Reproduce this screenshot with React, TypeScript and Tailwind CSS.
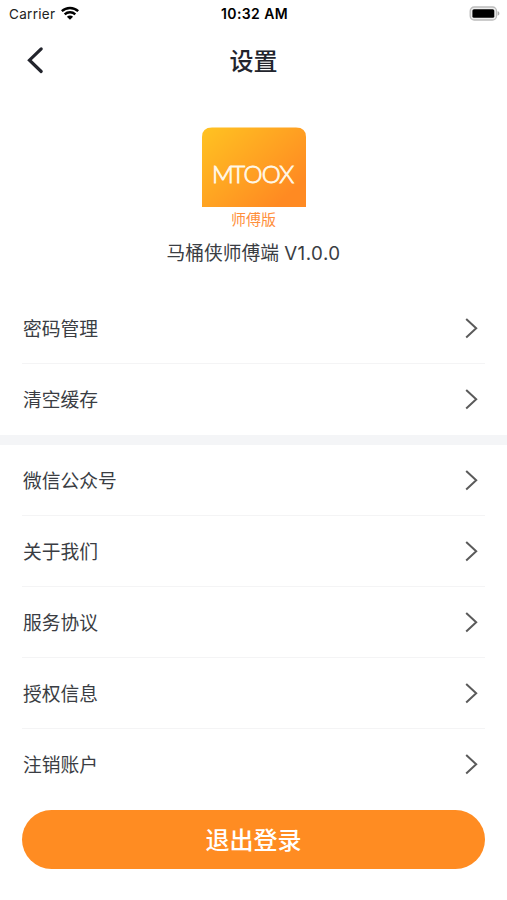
interface SettingItem {
  key: string;
  label: string;
}

const accountItems: SettingItem[] = [
  { key: 'password', label: '密码管理' },
  { key: 'cache', label: '清空缓存' },
];

const aboutItems: SettingItem[] = [
  { key: 'wechat', label: '微信公众号' },
  { key: 'about', label: '关于我们' },
  { key: 'terms', label: '服务协议' },
  { key: 'license', label: '授权信息' },
  { key: 'cancel', label: '注销账户' },
];

function StatusBar() {
  return (
    <div className="grid h-7 grid-cols-[1fr_auto_1fr] items-center pl-[9px] pr-[7px] font-['Inter','Liberation_Sans',sans-serif] text-[13.5px] text-black">
      <div className="flex items-center gap-[6px]">
        <span className="text-[#222] tracking-[0.3px]">Carrier</span>
        <svg width="18" height="14" viewBox="0 0 18 14" fill="none" stroke="#000" strokeWidth="2.4" className="-mt-0.5">
          <path d="M.8 5.2C5.3.9 12.7.9 17.2 5.2" />
          <path d="M3.7 8.3C6.7 5.5 11.3 5.5 14.3 8.3" />
          <path d="M9 13.8 5.9 10.8C7.6 9.1 10.4 9.1 12.1 10.8Z" fill="#000" stroke="none" />
        </svg>
      </div>
      <span className="-mt-0.5 text-center text-[14px] font-semibold tracking-[0.4px]">10:32 AM</span>
      <svg width="31" height="15" viewBox="0 0 31 15" className="-mt-0.5 justify-self-end">
        <rect x="1.2" y="1" width="26.3" height="13" rx="4" fill="#eee" stroke="#bcbcbc" strokeWidth="1.3" />
        <rect x="3.4" y="3.2" width="21.9" height="8.6" rx="1.6" fill="#000" />
        <path d="M28.6 5.3c2.4.6 2.4 3.8 0 4.4Z" fill="#aaa" />
      </svg>
    </div>
  );
}

function Logo() {
  return (
    <svg width="104" height="80" viewBox="0 0 104 80">
      <defs>
        <linearGradient id="logo-bg" x1="0" y1="0" x2="1" y2="0.85">
          <stop offset="0" stopColor="#ffc322" />
          <stop offset="0.9" stopColor="#ff8a22" />
        </linearGradient>
      </defs>
      <path d="M0 80V10Q0 .5 10 .5H94Q104 .5 104 10V80Z" fill="url(#logo-bg)" />
      <text
        x="10 29.2 41.5 59.7 77.3"
        y="56"
        fill="#fff8e8"
        stroke="#fff8e8"
        strokeWidth="0.8"
        className="font-['Lato',sans-serif] text-[24px] font-light"
      >
        MTOOX
      </text>
    </svg>
  );
}

function SettingRow({ item }: { item: SettingItem }) {
  return (
    <button className="flex h-[71px] w-full items-center justify-between border-b border-[#f4f4f5] pr-[7px] text-left last:border-transparent">
      <span className="pt-1 pl-px text-[18.75px] leading-none">{item.label}</span>
      <svg width="13" height="22" viewBox="0 0 13 22" fill="none" stroke="#5a5a5a" strokeWidth="2">
        <path d="m1.2 2 10 9.3-10 9.3" />
      </svg>
    </button>
  );
}

function SettingGroup({ items }: { items: SettingItem[] }) {
  return (
    <div className="px-[22px]">
      {items.map(item => (
        <SettingRow key={item.key} item={item} />
      ))}
    </div>
  );
}

export default function App() {
  return (
    <div className="flex h-[900px] w-[507px] flex-col overflow-hidden bg-white font-['Inter','Noto_Sans_CJK_SC',sans-serif] text-[#3a3d43]">
      <StatusBar />

      <header className="grid h-16 grid-cols-[60px_1fr_60px] items-center">
        <button className="flex pl-[26px]">
          <svg width="19" height="28" viewBox="0 0 19 28" fill="none" stroke="#22242c" strokeWidth="3.2" strokeLinecap="round">
            <path d="M15.2 2.9 3.5 14.2l11.7 11.3" />
          </svg>
        </button>
        <h1 className="pt-[3px] text-center text-[24px] font-medium leading-none text-[#22242c]">设置</h1>
      </header>

      <section className="flex h-[201px] flex-col items-center pt-[35px]">
        <Logo />
        <span className="mt-1 text-[15px] leading-[18px] text-[#ff8f3c]">师傅版</span>
        <p className="mt-[13px] text-[18.75px] leading-6">
          马桶侠师傅端 <span className="tracking-[0.45px]">V1.0.0</span>
        </p>
      </section>

      <SettingGroup items={accountItems} />
      <div className="h-2.5 shrink-0 bg-[#f4f5f7]" />
      <SettingGroup items={aboutItems} />

      <div className="px-[22px] pt-2.5">
        <button className="h-[59px] w-full rounded-full bg-[#ff8c22] pt-[3px] text-[24px] font-medium leading-none text-white">
          退出登录
        </button>
      </div>
    </div>
  );
}
